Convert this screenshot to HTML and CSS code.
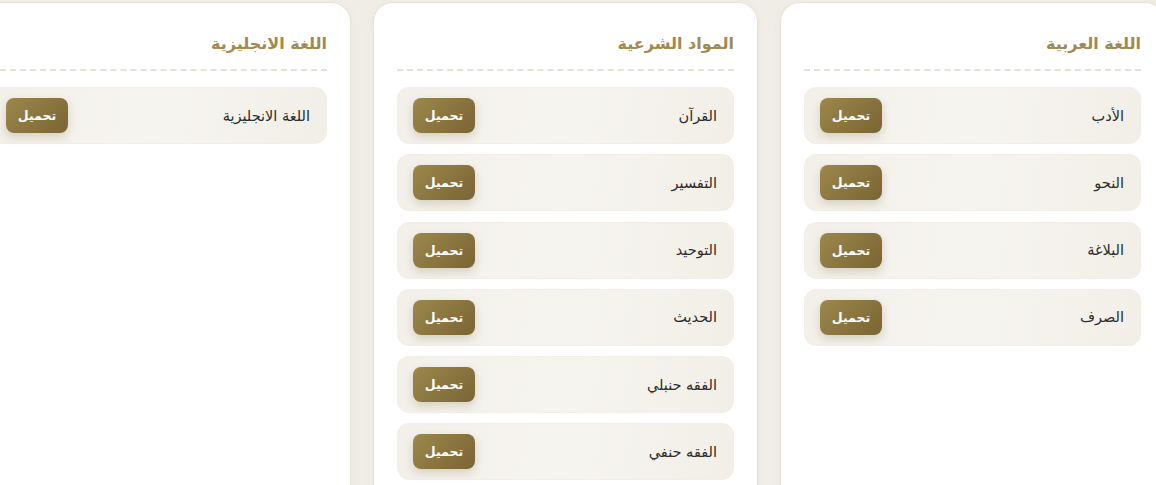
FILE: index.html
```html
<!DOCTYPE html>
<html lang="ar" dir="rtl">
<head>
<meta charset="utf-8">
<title>المواد</title>
<link rel="stylesheet" href="styles.css">
</head>
<body>
<main class="grid">
  <section class="card">
    <h2 class="card-title">اللغة العربية</h2>
    <ul class="list">
      <li class="row"><span class="name">الأدب</span><button class="btn">تحميل</button></li>
      <li class="row"><span class="name">النحو</span><button class="btn">تحميل</button></li>
      <li class="row"><span class="name">البلاغة</span><button class="btn">تحميل</button></li>
      <li class="row"><span class="name">الصرف</span><button class="btn">تحميل</button></li>
    </ul>
  </section>
  <section class="card">
    <h2 class="card-title">المواد الشرعية</h2>
    <ul class="list">
      <li class="row"><span class="name">القرآن</span><button class="btn">تحميل</button></li>
      <li class="row"><span class="name">التفسير</span><button class="btn">تحميل</button></li>
      <li class="row"><span class="name">التوحيد</span><button class="btn">تحميل</button></li>
      <li class="row"><span class="name">الحديث</span><button class="btn">تحميل</button></li>
      <li class="row"><span class="name">الفقه حنبلي</span><button class="btn">تحميل</button></li>
      <li class="row"><span class="name">الفقه حنفي</span><button class="btn">تحميل</button></li>
    </ul>
  </section>
  <section class="card">
    <h2 class="card-title">اللغة الانجليزية</h2>
    <ul class="list">
      <li class="row"><span class="name">اللغة الانجليزية</span><button class="btn">تحميل</button></li>
    </ul>
  </section>
</main>
</body>
</html>
```
FILE: styles.css
```css
html, body {
  margin: 0;
  padding: 0;
  height: 100%;
  overflow: hidden;
}
body {
  background: #f0ede7;
  font-family: "DejaVu Sans", "Noto Sans", sans-serif;
  color: #2a2a2a;
}
.grid {
  display: flex;
  direction: rtl;
  gap: 22px;
  margin-right: -9px;
  padding-top: 2px;
}
.card {
  flex: 0 0 385px;
  box-sizing: border-box;
  height: 520px;
  background: #ffffff;
  border: 1px solid #e8e3d9;
  border-radius: 20px;
  padding: 27px 23px 0;
  box-shadow: 0 2px 10px rgba(120, 100, 60, 0.05);
}
.card-title {
  margin: 0;
  font-size: 16px;
  line-height: 27px;
  font-weight: 600;
  color: #a08a50;
  padding-bottom: 12px;
  border-bottom: 2px dashed #e6e1d7;
}
.list {
  list-style: none;
  margin: 16px 0 0;
  padding: 0;
  display: flex;
  flex-direction: column;
  gap: 10.25px;
}
.row {
  height: 57px;
  box-sizing: border-box;
  display: flex;
  align-items: center;
  justify-content: space-between;
  padding: 0 16px 0 15px;
  border-radius: 12px;
  background: linear-gradient(100deg, #f3f0ea 0%, #f6f4ef 50%, #f2efe8 100%);
  border: 1px solid #f1eee8;
}
.name {
  font-size: 14.5px;
  color: #2b2b2b;
}
.btn {
  width: 62px;
  height: 35px;
  border: none;
  border-radius: 8px;
  background: linear-gradient(135deg, #9c874c 0%, #7a6534 100%);
  color: #ffffff;
  font-family: inherit;
  font-weight: 700;
  font-size: 12.5px;
  box-shadow: 0 4px 10px rgba(110, 90, 40, 0.22);
  cursor: pointer;
}
```
